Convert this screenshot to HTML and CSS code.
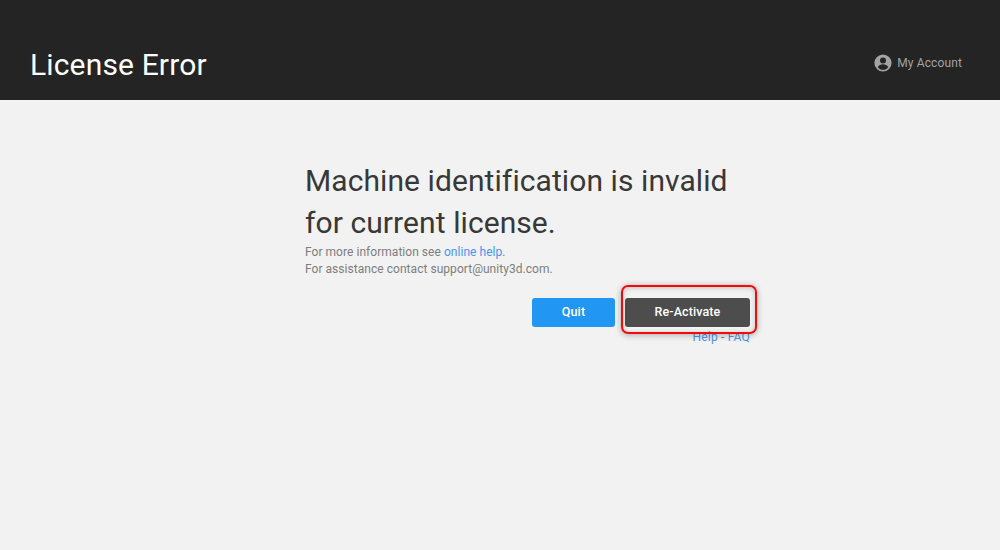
FILE: index.html
```html
<!DOCTYPE html>
<html lang="en">
<head>
<meta charset="utf-8">
<title>License Error</title>
<link rel="stylesheet" href="styles.css">
</head>
<body>
<header class="top">
  <h1 class="title">License Error</h1>
  <a class="account">
    <svg class="account-icon" viewBox="0 0 18 18" width="18" height="18"><circle cx="9" cy="9" r="8.6" fill="currentColor"/><circle cx="9" cy="6.6" r="3" fill="#242424"/><path fill="#242424" d="M3.8 13.2c.5-1.9 3.3-2.9 5.2-2.9s4.7 1 5.2 2.9c-1.2 1.6-3.1 2.6-5.2 2.6s-4-1-5.2-2.6z"/></svg>
    <span>My Account</span>
  </a>
</header>
<main class="content">
  <section class="panel">
    <h2 class="message">Machine identification is invalid for current license.</h2>
    <p class="info">For more information see <a class="link">online help</a>.</p>
    <p class="info">For assistance contact support@unity3d.com.</p>
    <div class="actions">
      <button class="btn btn-blue">Quit</button>
      <button class="btn btn-dark">Re-Activate</button>
    </div>
    <div class="help"><a class="link">Help</a> - <a class="link">FAQ</a></div>
  </section>
</main>
</body>
</html>
```
FILE: styles.css
```css
* { box-sizing: border-box; }
html, body { margin: 0; height: 100%; }
body { background: #f2f2f2; font-family: Roboto, sans-serif; overflow: hidden; }
.top { height: 100px; background: #242424; display: flex; align-items: center; justify-content: space-between; padding: 29px 38px 0 30px; }
.title { margin: 0; font-size: 30px; font-weight: 400; color: #fff; letter-spacing: 0.15px; }
.account { display: flex; align-items: center; gap: 5px; color: #a3a3a3; font-size: 12px; letter-spacing: 0.12px; margin-top: -4px; }
.account-icon { display: block; }
.content { padding: 60px 0 0 305px; }
.panel { width: 445px; }
.message { margin: 0; font-size: 30px; line-height: 42px; font-weight: 400; color: #383838; letter-spacing: 0.08px; }
.info { margin: 0; font-size: 12px; line-height: 17px; color: #7d7d7d; letter-spacing: 0.04px; }
.link { color: #4a94ee; }
.actions { display: flex; justify-content: flex-end; gap: 10px; margin-top: 20px; }
.btn { height: 29px; padding: 0 0 3px; border: 0; border-radius: 3px; font: 500 12.5px Roboto, sans-serif; letter-spacing: 0.1px; color: #fff; }
.btn-blue { width: 83px; background: #2196f3; }
.btn-dark { width: 125px; background: #4d4d4d; position: relative; }
.btn-dark::after { content: ""; position: absolute; top: -13px; left: -4px; right: -7px; bottom: -7px; border: 2px solid #f40a0a; border-radius: 7px; box-shadow: 0 1px 6px rgba(0,0,0,.3), inset 0 1px 5px rgba(0,0,0,.2); }
.help { text-align: right; font-size: 12px; line-height: 14px; margin-top: 3px; color: #777; letter-spacing: 0.2px; }
```
